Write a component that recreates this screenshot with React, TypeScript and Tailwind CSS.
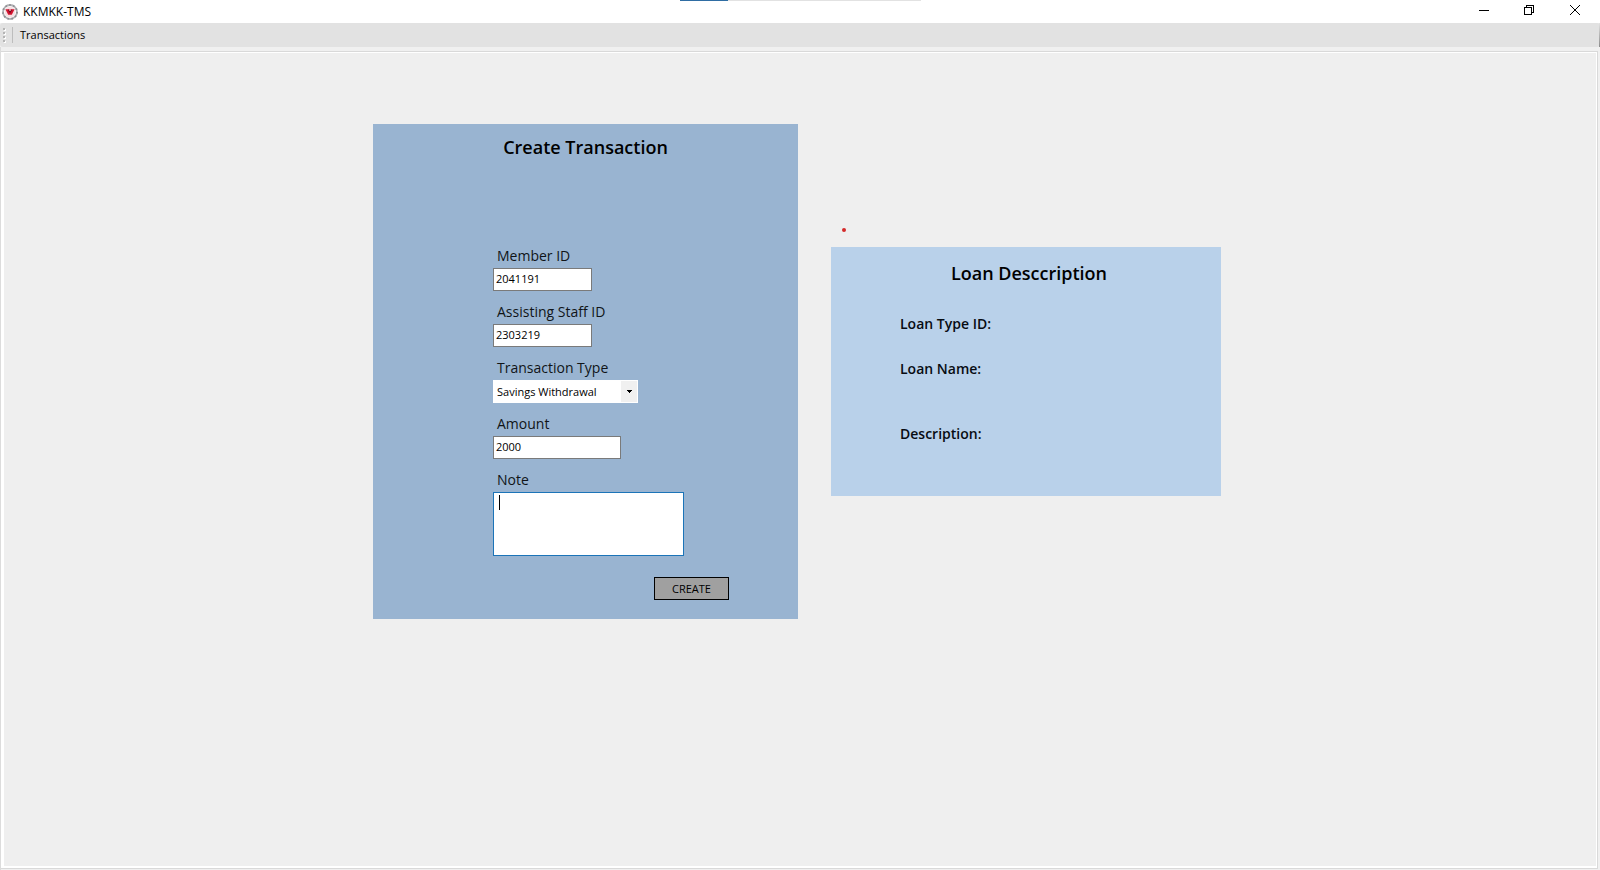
import { useState } from "react";
import type { ReactNode } from "react";

function AppLogo() {
  return (
    <svg width="16" height="16" viewBox="0 0 16 16" aria-hidden="true">
      <circle cx="8" cy="8" r="7" fill="#fff" stroke="#b0b0b3" strokeWidth="1.8" />
      <circle cx="8" cy="8" r="7" fill="none" stroke="#8c8c90" strokeWidth="1.8" strokeDasharray="1.5 2.5" />
      <circle cx="8" cy="8" r="5.4" fill="#f6dfe2" />
      <path d="M3.4 5.2h9.2L9.8 10.8H6.2z" fill="#d2142f" />
      <path d="M5.8 5.8h4.4L8 9.4z" fill="#7a0a20" />
      <circle cx="8" cy="6" r="0.9" fill="#f3b8c0" />
    </svg>
  );
}

function TitleBar() {
  return (
    <header className="relative flex h-[23px] items-center bg-white pl-[2px]">
      <AppLogo />
      <h1 className="pl-[5px] text-[12px] leading-4">KKMKK-TMS</h1>
      <div className="absolute inset-x-0 top-0 flex justify-center">
        <div className="h-px w-[241px] bg-[#e2e2e2]">
          <div className="h-px w-[48px] bg-[#2f6da3]" />
        </div>
      </div>
      <div className="relative ml-auto flex h-full pr-[2px]">
        <button type="button" aria-label="Minimize" className="flex w-[44px] items-center justify-center pb-[3px]">
          <svg width="10" height="10" viewBox="0 0 10 10" shapeRendering="crispEdges">
            <path d="M0 5.5h10" stroke="#000" />
          </svg>
        </button>
        <button type="button" aria-label="Restore" className="flex w-[46px] items-center justify-center pb-[3px]">
          <svg width="10" height="10" viewBox="0 0 10 10" fill="none" stroke="#000" shapeRendering="crispEdges">
            <path d="M.5 2.5h7v7h-7zM2.5 2.5v-2h7v7h-2" />
          </svg>
        </button>
        <button type="button" aria-label="Close" className="flex w-[46px] items-center justify-center pb-[3px]">
          <svg width="10" height="10" viewBox="0 0 10 10" fill="none" stroke="#000">
            <path d="M0 0l10 10M10 0L0 10" />
          </svg>
        </button>
      </div>
    </header>
  );
}

function ToolStrip() {
  return (
    <nav className="flex h-6 items-center rounded-[3px] bg-[#e2e2e2] pl-[3px]">
      <svg width="3" height="15" viewBox="0 0 3 15" shapeRendering="crispEdges" aria-hidden="true">
        {[0, 4, 8, 12].map((y) => (
          <g key={y}>
            <rect x="1" y={y + 1} width="2" height="2" fill="#fff" />
            <rect x="0" y={y} width="2" height="2" fill="#b4b4b4" />
          </g>
        ))}
      </svg>
      <div className="ml-[6px] h-4 w-px bg-[#bdbdbd]" />
      <button type="button" className="pl-[7px] text-[11px] leading-4">
        Transactions
      </button>
      <div className="ml-auto h-full w-px bg-linear-to-b from-[#e2e2e2] to-[#8c8c8c]" />
    </nav>
  );
}

function Field({ id, label, children }: { id: string; label: string; children: ReactNode }) {
  return (
    <div className="flex flex-col items-start">
      <label htmlFor={id} className="pb-[2px] pl-1 text-[14px] leading-5 text-[#101418]">
        {label}
      </label>
      {children}
    </div>
  );
}

function TransactionForm() {
  const [member, setMember] = useState("2041191");
  const [staff, setStaff] = useState("2303219");
  const [kind, setKind] = useState("Savings Withdrawal");
  const [amount, setAmount] = useState("2000");
  const [note, setNote] = useState("");
  const box = "h-[23px] border border-[#7a7a7a] bg-white px-[2px] pb-[2px] text-[11px] leading-4 outline-none";

  return (
    <form
      onSubmit={(e) => e.preventDefault()}
      className="w-[425px] bg-[#99b4d1] pt-[9px] pb-[19px]"
    >
      <h2 className="text-center text-[18px] leading-7 font-semibold">Create Transaction</h2>
      <div className="flex flex-col items-start gap-[11px] pt-[85px] pl-[120px]">
        <Field id="member" label="Member ID">
          <input id="member" value={member} onChange={(e) => setMember(e.target.value)} className={`${box} w-[99px]`} />
        </Field>
        <Field id="staff" label="Assisting Staff ID">
          <input id="staff" value={staff} onChange={(e) => setStaff(e.target.value)} className={`${box} w-[99px]`} />
        </Field>
        <Field id="kind" label="Transaction Type">
          <div className="relative">
            <select
              id="kind"
              value={kind}
              onChange={(e) => setKind(e.target.value)}
              className="block h-[23px] w-[145px] appearance-none bg-white pl-1 text-[11px] leading-4 outline-none"
            >
              <option>Savings Withdrawal</option>
            </select>
            <span className="pointer-events-none absolute inset-y-px right-px flex w-4 items-center justify-center bg-[#f0f0f0]">
              <svg width="5" height="3" viewBox="0 0 5 3" shapeRendering="crispEdges" aria-hidden="true">
                <path d="M0 0h5v1H4v1H3v1H2V2H1V1H0z" fill="#000" />
              </svg>
            </span>
          </div>
        </Field>
        <Field id="amount" label="Amount">
          <input id="amount" value={amount} onChange={(e) => setAmount(e.target.value)} className={`${box} w-[128px]`} />
        </Field>
        <Field id="note" label="Note">
          <div className="relative">
            <textarea
              id="note"
              value={note}
              onChange={(e) => setNote(e.target.value)}
              className="block h-[64px] w-[191px] resize-none border border-[#1c74b8] bg-white px-[5px] py-[2px] text-[11px] leading-4 caret-transparent outline-none"
            />
            <span className="pointer-events-none absolute top-[3px] left-[6px] h-[15px] w-px bg-black" />
          </div>
        </Field>
      </div>
      <div className="flex justify-end pt-[21px] pr-[69px]">
        <button type="submit" className="h-[23px] w-[75px] border border-black bg-[#a0a0a0] pt-px text-[11px] leading-4">
          CREATE
        </button>
      </div>
    </form>
  );
}

function LoanPanel() {
  return (
    <section className="w-[390px] bg-[#b9d1ea] pt-3 pb-[52px]">
      <h2 className="pl-[6px] text-center text-[18px] leading-7 font-semibold">Loan Desccription</h2>
      <dl className="pl-[69px] text-[14px] leading-5 font-semibold text-[#080c12]">
        <dt className="pt-[27px]">Loan Type ID:</dt>
        <dt className="pt-[25px]">Loan Name:</dt>
        <dt className="pt-[45px]">Description:</dt>
      </dl>
    </section>
  );
}

export default function App() {
  return (
    <div className="flex min-h-screen flex-col bg-[#f0f0f0] font-['Open_Sans','Noto_Sans',sans-serif] text-black">
      <TitleBar />
      <ToolStrip />
      <div className="flex grow flex-col border-l border-[#dcdcdc] pt-1 pr-[2px] pb-px">
        <main className="flex grow border border-l-0 border-[#d9d9d9] bg-white pt-px pr-px pb-[2px] pl-[3px]">
          <div className="flex grow items-start justify-center gap-[33px] bg-[#efefef] pt-[71px] pr-[6px]">
            <TransactionForm />
            <div className="pt-[104px]">
              <div className="ml-[11px] size-1 rounded-full bg-[#d42a2a]" />
              <div className="pt-[15px]">
                <LoanPanel />
              </div>
            </div>
          </div>
        </main>
      </div>
    </div>
  );
}
